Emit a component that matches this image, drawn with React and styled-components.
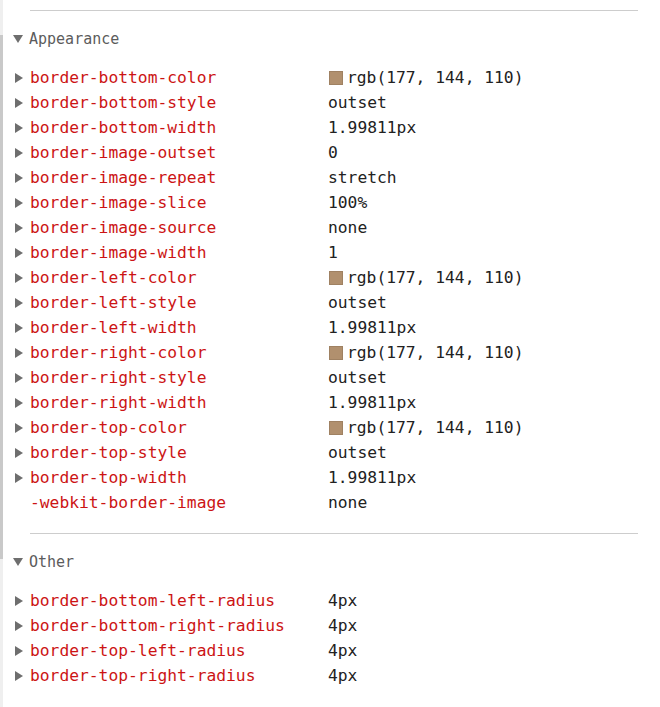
import React from "react";
import styled, {createGlobalStyle} from "styled-components";

const appearance = [
	["border-bottom-color", "rgb(177, 144, 110)", true],
	["border-bottom-style", "outset"],
	["border-bottom-width", "1.99811px"],
	["border-image-outset", "0"],
	["border-image-repeat", "stretch"],
	["border-image-slice", "100%"],
	["border-image-source", "none"],
	["border-image-width", "1"],
	["border-left-color", "rgb(177, 144, 110)", true],
	["border-left-style", "outset"],
	["border-left-width", "1.99811px"],
	["border-right-color", "rgb(177, 144, 110)", true],
	["border-right-style", "outset"],
	["border-right-width", "1.99811px"],
	["border-top-color", "rgb(177, 144, 110)", true],
	["border-top-style", "outset"],
	["border-top-width", "1.99811px"],
	["-webkit-border-image", "none", false, true],
];

const other = [
	["border-bottom-left-radius", "4px"],
	["border-bottom-right-radius", "4px"],
	["border-top-left-radius", "4px"],
	["border-top-right-radius", "4px"],
];

const Section = ({title, rows}) => (
	<SectionBox>
		<Divider />
		<Header>
			<DownArrow />
			<HeaderText>{title}</HeaderText>
		</Header>
		<List>
			{rows.map(([name, value, swatch, noArrow]) => (
				<Row key={name}>
					<ArrowCell>{!noArrow && <RightArrow />}</ArrowCell>
					<Name>{name}</Name>
					<Value>
						{swatch && <Swatch />}
						{value}
					</Value>
				</Row>
			))}
		</List>
	</SectionBox>
);

const App = () => {
	return (
		<>
			<GlobalStyle />
			<Page>
				<Track>
					<Thumb />
				</Track>
				<Content>
					<Section title="Appearance" rows={appearance} />
					<Section title="Other" rows={other} />
				</Content>
			</Page>
		</>
	);
};

const GlobalStyle = createGlobalStyle`
  html, body {
    margin: 0;
    background: #ffffff;
  }
`;

const Page = styled.div`
  display: flex;
  min-height: 707px;
`;

const Track = styled.div`
  width: 3px;
  flex-shrink: 0;
  background-color: #efefef;
`;

const Thumb = styled.div`
  margin-top: 35px;
  height: 524px;
  background-color: #c9c9c9;
`;

const Content = styled.div`
  flex: 1;
  padding-top: 10px;
`;

const SectionBox = styled.div`
  display: flex;
  flex-direction: column;
  padding-bottom: 18px;
`;

const Divider = styled.div`
  height: 1px;
  margin: 0 22px 0 27px;
  background-color: #cdcdcd;
`;

const Header = styled.div`
  display: flex;
  align-items: center;
  height: 25px;
  margin-top: 15px;
`;

const DownArrow = styled.span`
  width: 0;
  height: 0;
  margin: 1px 0 0 10px;
  border-left: 5px solid transparent;
  border-right: 5px solid transparent;
  border-top: 8px solid #6e6e6e;
`;

const HeaderText = styled.span`
  margin-left: 6px;
  font-family: "DejaVu Sans Mono", "Liberation Mono", monospace;
  font-size: 15px;
  color: #5c5c5c;
`;

const List = styled.div`
  display: flex;
  flex-direction: column;
  margin-top: 14px;
`;

const Row = styled.div`
  display: grid;
  grid-template-columns: 27px 298px 1fr;
  align-items: center;
  height: 25px;
  font-family: "DejaVu Sans Mono", "Liberation Mono", monospace;
  font-size: 16.3px;
  white-space: nowrap;
`;

const ArrowCell = styled.span`
  display: flex;
  align-items: center;
  padding-left: 12px;
`;

const RightArrow = styled.span`
  width: 0;
  height: 0;
  border-top: 5.5px solid transparent;
  border-bottom: 5.5px solid transparent;
  border-left: 8px solid #6e6e6e;
`;

const Name = styled.span`
  color: #cc1414;
`;

const Value = styled.span`
  display: flex;
  align-items: center;
  color: #222222;
`;

const Swatch = styled.span`
  width: 14px;
  height: 14px;
  margin: 0 4px 0 1px;
  background-color: rgb(177, 144, 110);
  box-sizing: border-box;
  border: 1px solid rgba(0, 0, 0, 0.1);
`;

export default App;
